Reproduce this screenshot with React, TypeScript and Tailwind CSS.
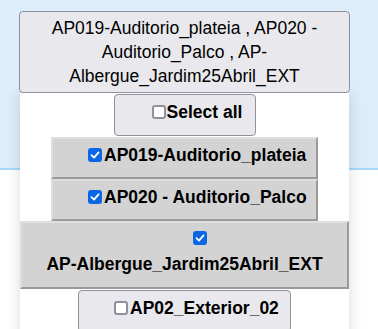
const font = { fontFamily: '"Liberation Sans", Arial, sans-serif' };

const Box = ({ checked }: { checked: boolean }) =>
  checked ? (
    <span className="inline-flex w-[14px] h-[14px] shrink-0 items-center justify-center rounded-[3px] bg-[#0b66e4]">
      <svg width="10" height="10" viewBox="0 0 10 10">
        <path d="M1.5 5.2 L4 7.6 L8.6 2.4" fill="none" stroke="white" strokeWidth="1.8" strokeLinecap="round" strokeLinejoin="round" />
      </svg>
    </span>
  ) : (
    <span className="inline-block w-[14px] h-[14px] shrink-0 rounded-[3px] border-2 border-[#8f8f9d] bg-white" />
  );

const App = () => {
  return (
    <div className="relative h-[329px] w-[378px] overflow-hidden bg-white text-black" style={font}>
      {/* page behind the dropdown */}
      <div className="h-[170px] bg-[#deedfb] border-b-2 border-[#a8d8f8]" />

      {/* --- dropdown --- */}
      <div className="absolute left-[19px] top-[11px] w-[331px] text-[17.5px] leading-[24px]">
        <button className="w-full h-[82px] rounded-[4px] border border-[#8f8f9d] bg-[#e9e9ed] px-2 text-center">
          AP019-Auditorio_plateia , AP020 -<br />
          Auditorio_Palco , AP-<br />
          Albergue_Jardim25Abril_EXT
        </button>

        <div className="ml-[1px] w-[329px] h-[260px] bg-white shadow-[0_0_14px_rgba(0,0,0,0.14)] flex flex-col items-center pt-[1px] font-bold">
          {/* select all */}
          <div className="flex h-[42px] w-[142px] items-center rounded-[4px] border border-[#8f8f9d] bg-[#e9e9ed] pl-[37px] pb-[7px]">
            <Box checked={false} />
            <span className="ml-[1px]">Select all</span>
          </div>

          {/* selected options */}
          <div className="mt-[1px] flex h-[42px] w-[267px] items-center bg-[#d3d3d3] border-2 border-t-[#dedede] border-l-[#dedede] border-r-[#9a9a9a] border-b-[#9a9a9a] pl-[35px] pb-[7px]">
            <Box checked />
            <span className="ml-[2px]">AP019-Auditorio_plateia</span>
          </div>

          <div className="flex h-[42px] w-[267px] items-center bg-[#d3d3d3] border-2 border-t-[#dedede] border-l-[#dedede] border-r-[#9a9a9a] border-b-[#9a9a9a] pl-[35px] pb-[7px]">
            <Box checked />
            <span className="ml-[2px]">AP020 - Auditorio_Palco</span>
          </div>

          <div className="flex h-[68px] w-[329px] flex-col items-center bg-[#d3d3d3] border-2 border-t-[#dedede] border-l-[#dedede] border-r-[#9a9a9a] border-b-[#9a9a9a] pt-[8px]">
            <span className="ml-[31px] flex h-[14px] items-center">
              <Box checked />
            </span>
            <span className="mt-[7px]">AP-Albergue_Jardim25Abril_EXT</span>
          </div>

          {/* not selected */}
          <div className="mt-[1px] flex h-[42px] w-[213px] items-center rounded-[4px] border border-[#8f8f9d] bg-[#e9e9ed] pl-[35px] pb-[7px]">
            <Box checked={false} />
            <span className="ml-[2px]">AP02_Exterior_02</span>
          </div>
        </div>
      </div>
    </div>
  );
};

export default App;
